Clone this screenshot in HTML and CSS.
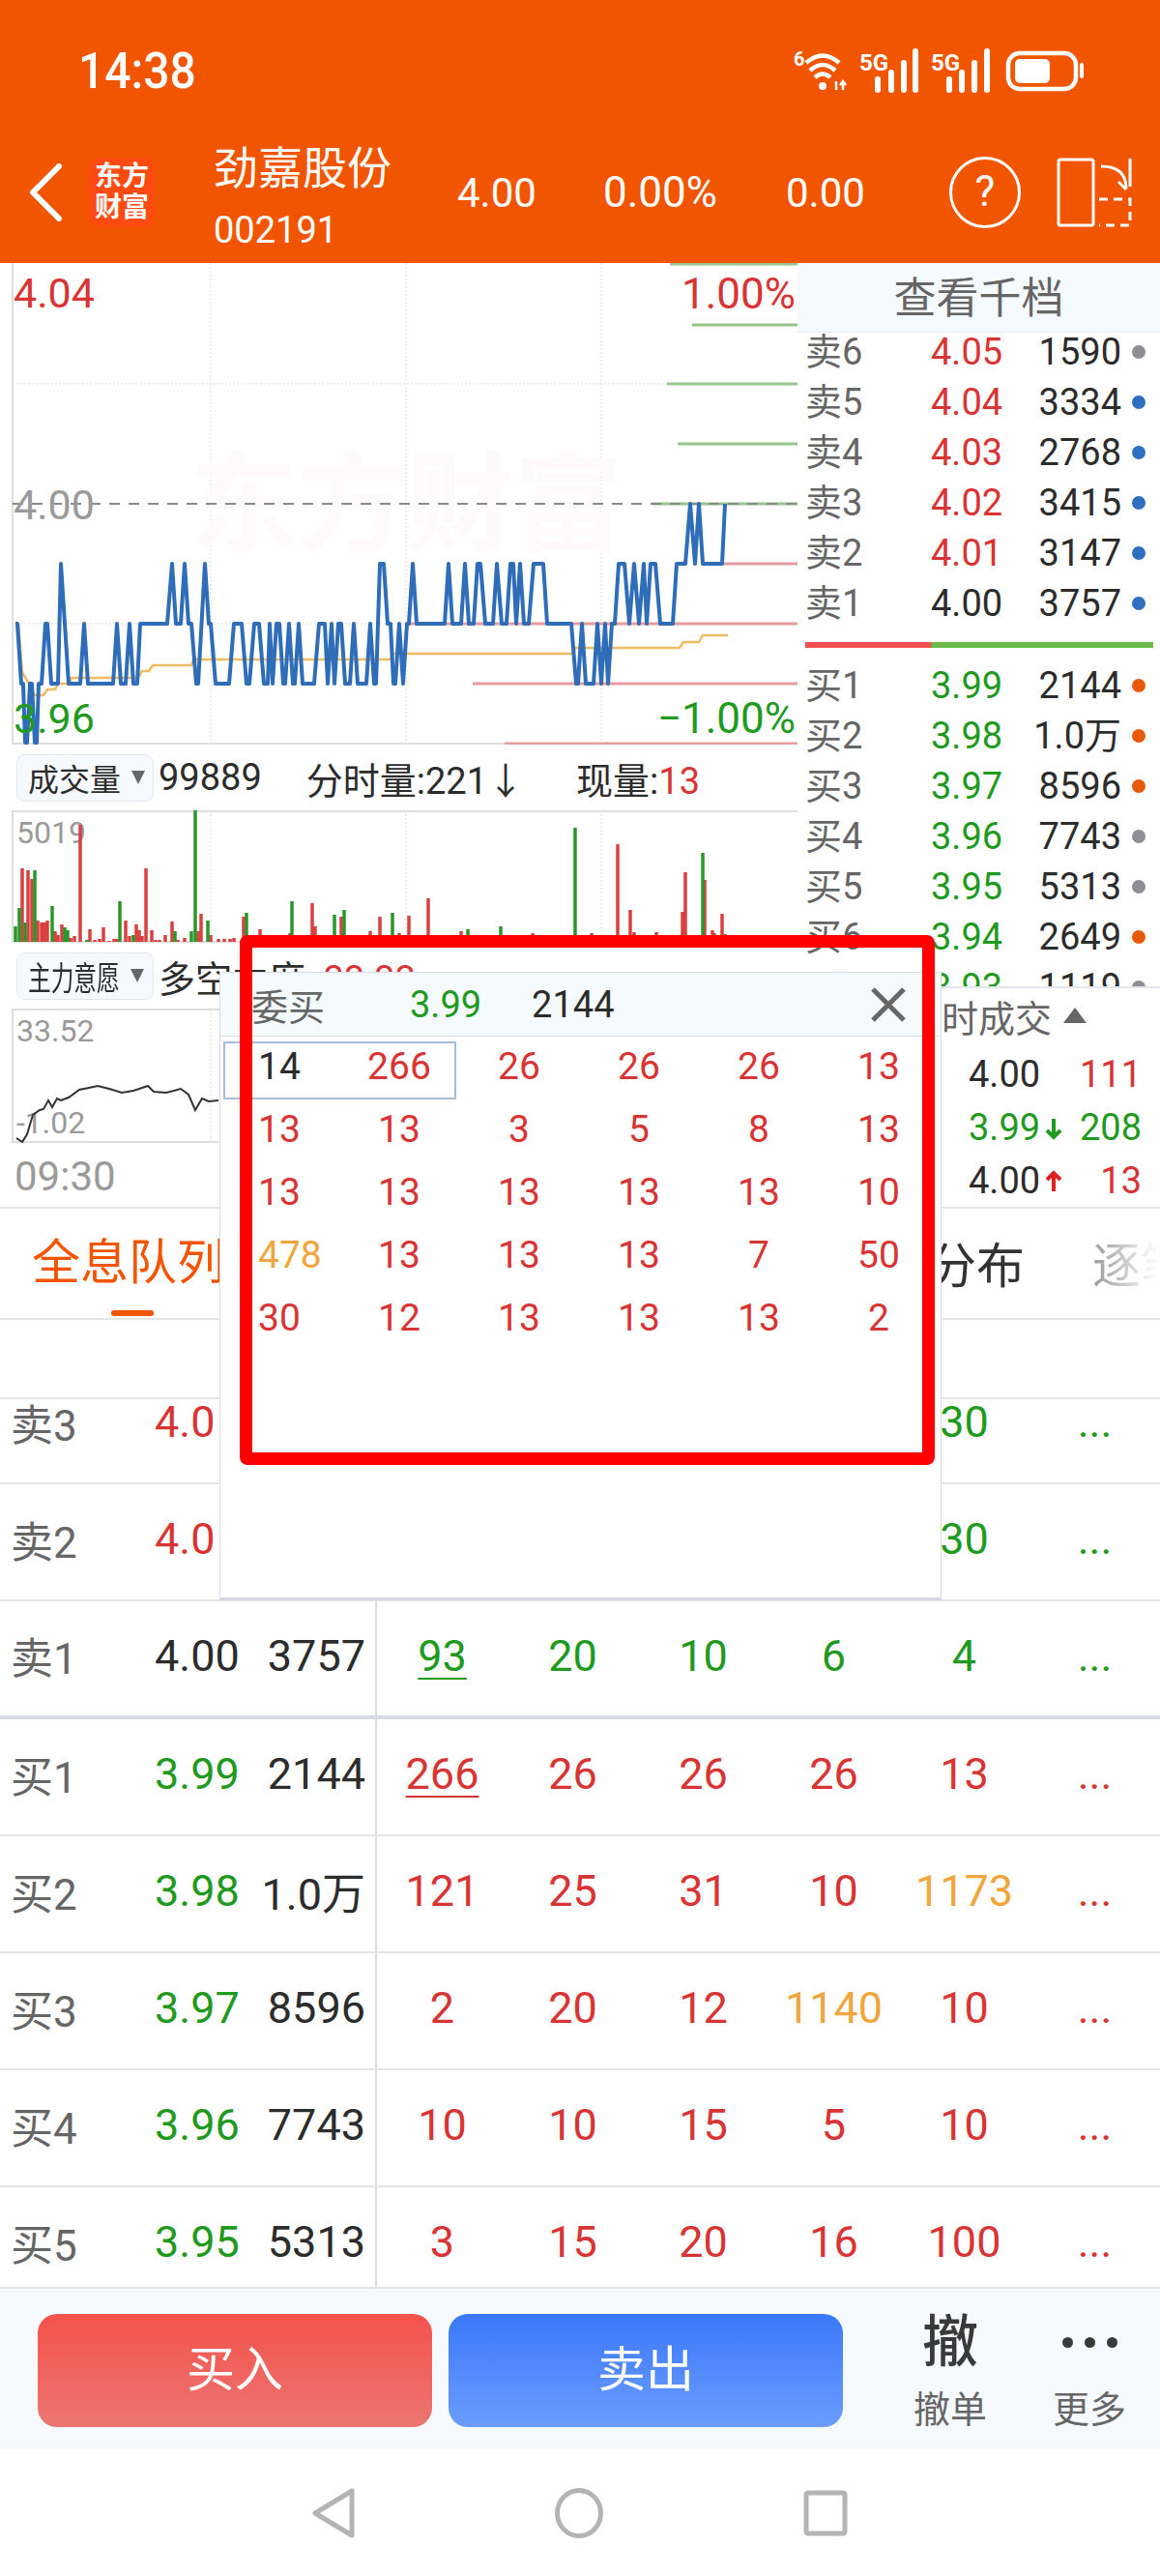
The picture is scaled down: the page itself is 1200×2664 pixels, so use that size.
FILE: index.html
```html
<!DOCTYPE html>
<html lang="zh-CN">
<head>
    <meta charset="UTF-8">
    <meta name="viewport" content="width=device-width, initial-scale=1.0">
    <title>劲嘉股份</title>
    <link rel="stylesheet" href="styles.css">
</head>
<body>
    <div class="page">

        <!-- Cabecera -->
        <header class="top">
            <div class="status-bar">
                <span class="clock">14:38</span>
                <svg class="status-icons" width="302" height="46" viewBox="820 50 302 46">
                    <text class="st-tiny" x="821" y="68">6</text>
                    <path class="st-line" d="M834 65 Q851 50 868 65 M838 73 Q851 61 864 73 M843 80 Q851 73 859 80"/>
                    <circle class="st-fill" cx="851" cy="89" r="4"/>
                    <path class="st-thin" d="M865 93 V84 M872 93 V84 M869 88 L872 84 L875 88"/>
                    <text class="st-5g" x="889" y="73">5G</text>
                    <path class="st-bars" d="M908 93 V82 M922 93 V75 M935 93 V65 M947 93 V53"/>
                    <text class="st-5g" x="963" y="73">5G</text>
                    <path class="st-bars" d="M982 93 V82 M995 93 V75 M1008 93 V65 M1021 93 V53"/>
                    <rect class="st-line" x="1043" y="55" width="70" height="37" rx="12"/>
                    <rect class="st-fill" x="1050" y="61" width="36" height="25" rx="5"/>
                    <rect class="st-fill" x="1117" y="65" width="4" height="16" rx="2"/>
                </svg>
            </div>
            <div class="nav-row">
                <svg class="back" width="36" height="60" viewBox="0 0 36 60">
                    <path d="M32 3 L5 30 L32 57"/>
                </svg>
                <div class="logo">东方<br>财富</div>
                <div class="stock">
                    <div>劲嘉股份</div>
                    <div class="stock-code">002191</div>
                </div>
                <span class="quote q-price">4.00</span>
                <span class="quote q-pct">0.00%</span>
                <span class="quote q-chg">0.00</span>
                <div class="help">?</div>
                <svg class="split" width="78" height="72" viewBox="0 0 78 72">
                    <rect x="2" y="2" width="36" height="68" rx="2"/>
                    <path d="M46 9 Q72 9 72 32 M64 25 L72 33 M76 1 V30"/>
                    <path class="split-dash" d="M44 43 H76 V70 H44"/>
                </svg>
            </div>
        </header>

        <!-- Graficos y libro de ordenes -->
        <section class="main">
            <div class="charts">
                <svg class="price-chart" width="825" height="498" viewBox="0 272 825 498">
                    <path class="grid-dot" d="M218 272 V769 M420 272 V769 M622 272 V769 M13 397 H825 M13 645 H825"/>
                    <path class="axis" d="M13 272 V769 H825"/>
                    <text class="watermark" x="196" y="562">东方财富</text>
                    <path class="depth-green" d="M693 273 H825 M716 336 H825 M690 397 H825 M701 459 H825 M675 521 H825"/>
                    <path class="depth-red" d="M746 583 H825 M421 645 H825 M489 707 H825 M522 769 H825"/>
                    <path class="mid-line" d="M13 521 H825"/>
                    <polyline class="avg-line" points="19,645 23,695 30,707 36,719 45,719 49,713 57,713 60,707 72,707 74,701 143,701 147,694 154,694 158,688 198,688 200,682 404,682 407,676 593,676 595,670 703,670 707,664 723,664 727,657 753,657"/>
                    <polyline class="price-line" points="16,645 18,645 22,707 24,707 26,768 28,768 31,707 33,707 36,768 38,768 40,707 43,707 47,645 49,645 53,707 60,707 63,583 71,707 83,707 87,645 91,707 117,707 121,645 125,707 130,707 134,645 138,707 142,707 145,645 173,645 178,583 182,645 187,645 191,583 195,645 198,645 203,707 205,707 212,583 216,645 218,645 223,707 237,707 242,645 250,645 255,707 258,707 263,645 268,645 273,707 277,707 279,645 282,707 286,645 289,645 293,707 295,707 299,645 303,707 305,707 309,645 313,707 325,707 330,645 336,645 339,707 343,645 346,707 350,645 353,645 357,707 362,707 366,645 370,707 379,707 383,645 387,707 389,707 393,583 397,583 401,645 404,645 407,707 409,707 413,645 417,707 421,645 423,645 427,583 431,645 460,645 464,583 468,645 477,645 481,583 485,645 490,645 494,583 497,583 502,645 510,645 514,583 519,645 524,645 528,583 531,583 534,645 538,583 542,645 547,645 552,583 562,583 566,645 591,645 596,707 598,707 602,645 606,707 614,707 618,645 622,707 626,645 629,707 633,645 636,645 640,583 646,583 651,645 656,583 661,645 666,583 669,645 673,583 678,583 683,645 696,645 700,583 709,583 714,521 719,583 723,521 727,583 747,583 750,521"/>
                    <text class="lbl red" x="14" y="318">4.04</text>
                    <text class="lbl lbl-end red" x="823" y="319">1.00%</text>
                    <text class="lbl gray" x="14" y="537">4.00</text>
                    <text class="lbl green" x="14" y="758">3.96</text>
                    <text class="lbl lbl-end green" x="823" y="758">−1.00%</text>
                </svg>

                <div class="stat-row">
                    <div class="picker"><span>成交量</span><i class="caret"></i></div>
                    <span class="stat-num">99889</span>
                    <span class="stat-a">分时量:221↓</span>
                    <span class="stat-b">现量:<span class="red">13</span></span>
                </div>

                <svg class="vol-chart" width="825" height="137" viewBox="0 838 825 137">
                    <path class="grid-dot" d="M218 838 V974 M420 838 V974 M622 838 V974"/>
                    <path class="axis" d="M825 839 H13 V974 H825"/>
                    <text class="small-lbl" x="17" y="872">5019</text>
                    <path class="bar-red" d="M23 974V898M29 974V900M33 974V909M39 974V952M43 974V954M46 974V954M49 974V952M57 974V963M60 974V967M64 974V956M73 974V970M77 974V968M83 974V853M93 974V961M98 974V972M103 974V971M107 974V959M113 974V973M118 974V971M121 974V971M130 974V952M134 974V968M141 974V956M144 974V962M147 974V968M151 974V898M157 974V962M161 974V972M165 974V972M171 974V967M178 974V953M184 974V972M191 974V970M205 974V963M208 974V945M218 974V967M226 974V971M232 974V971M238 974V971M242 974V970M252 974V948M269 974V961M300 974V965M323 974V934M326 974V958M353 974V948M383 974V963M393 974V948M413 974V965M423 974V947M443 974V929M477 974V963M551 974V965M612 974V965M639 974V873M652 974V941M656 974V964M679 974V964M706 974V943M709 974V902M729 974V910M737 974V962M739 974V965M747 974V945M750 974V966"/>
                    <path class="bar-green" d="M16 974V958M20 974V939M26 974V954M36 974V900M54 974V937M67 974V959M70 974V962M90 974V972M124 974V932M138 974V967M181 974V963M198 974V963M202 974V838M215 974V952M255 974V944M302 974V932M346 974V946M356 974V941M406 974V944M484 974V961M518 974V958M595 974V856M727 974V882"/>
                </svg>

                <div class="stat-row">
                    <div class="picker"><span class="squeeze">主力意愿</span><i class="caret caret-tight"></i></div>
                    <span class="stat-num">多空力度: <span class="red">33.33</span></span>
                </div>

                <svg class="mini-chart" width="825" height="139" viewBox="0 1043 825 139">
                    <path class="grid-dot" d="M218 1043 V1180"/>
                    <path class="axis" d="M825 1044 H13 V1181 H825"/>
                    <text class="small-lbl" x="17" y="1077">33.52</text>
                    <text class="small-lbl" x="17" y="1172">-1.02</text>
                    <polyline class="mini-line" points="17,1177 23,1181 28,1173 34,1153 41,1148 45,1147 50,1138 54,1145 59,1136 63,1138 71,1135 82,1127 92,1125 101,1123 113,1126 126,1130 138,1128 153,1123 159,1129 172,1130 187,1126 195,1132 202,1148 209,1136 216,1139 226,1138"/>
                </svg>

                <div class="time-row">09:30</div>
            </div>

            <aside class="side">
                <div class="book">
                    <div class="book-title">查看千档</div>
                    <div class="book-rows">
                        <div class="level"><span class="gray-d">卖6</span><span class="red">4.05</span><span class="vol">1590</span><i class="dot d-gray"></i></div>
                        <div class="level"><span class="gray-d">卖5</span><span class="red">4.04</span><span class="vol">3334</span><i class="dot d-blue"></i></div>
                        <div class="level"><span class="gray-d">卖4</span><span class="red">4.03</span><span class="vol">2768</span><i class="dot d-blue"></i></div>
                        <div class="level"><span class="gray-d">卖3</span><span class="red">4.02</span><span class="vol">3415</span><i class="dot d-blue"></i></div>
                        <div class="level"><span class="gray-d">卖2</span><span class="red">4.01</span><span class="vol">3147</span><i class="dot d-blue"></i></div>
                        <div class="level"><span class="gray-d">卖1</span><span>4.00</span><span class="vol">3757</span><i class="dot d-blue"></i></div>
                        <div class="book-sep"><div class="sep-bar"></div></div>
                        <div class="level"><span class="gray-d">买1</span><span class="green">3.99</span><span class="vol">2144</span><i class="dot d-orange"></i></div>
                        <div class="level"><span class="gray-d">买2</span><span class="green">3.98</span><span class="vol">1.0万</span><i class="dot d-orange"></i></div>
                        <div class="level"><span class="gray-d">买3</span><span class="green">3.97</span><span class="vol">8596</span><i class="dot d-orange"></i></div>
                        <div class="level"><span class="gray-d">买4</span><span class="green">3.96</span><span class="vol">7743</span><i class="dot d-gray"></i></div>
                        <div class="level"><span class="gray-d">买5</span><span class="green">3.95</span><span class="vol">5313</span><i class="dot d-gray"></i></div>
                        <div class="level"><span class="gray-d">买6</span><span class="green">3.94</span><span class="vol">2649</span><i class="dot d-orange"></i></div>
                        <div class="level"><span class="gray-d">买7</span><span class="green">3.93</span><span class="vol">1119</span><i class="dot d-gray"></i></div>
                    </div>
                </div>
                <div class="trades">
                    <div class="trades-title">分时成交<i class="caret-up"></i></div>
                    <div class="trade"><span>4.00</span><span></span><span class="vol red">111</span></div>
                    <div class="trade">
                        <span class="green">3.99</span>
                        <svg class="arrow arrow-down" width="18" height="24" viewBox="0 0 18 24"><path d="M9 2 V21 M2 14 L9 21 L16 14"/></svg>
                        <span class="vol green">208</span>
                    </div>
                    <div class="trade">
                        <span>4.00</span>
                        <svg class="arrow arrow-up" width="18" height="24" viewBox="0 0 18 24"><path d="M9 22 V3 M2 10 L9 3 L16 10"/></svg>
                        <span class="vol red">13</span>
                    </div>
                </div>
            </aside>
        </section>

        <!-- Pestanas -->
        <nav class="tabs">
            <span class="tab tab-active">全息队列</span>
            <span class="tab-gap"></span>
            <span class="tab">分布</span>
            <span class="tab tab-fade">逐笔</span>
        </nav>

        <!-- Tabla de colas -->
        <div class="table-head"></div>
        <div class="table-view">
            <div class="table-scroll">
                <div class="t-row">
                    <div class="t-left"><span class="gray-d">卖3</span><span class="red price-cut">4.02</span><span class="vol">3415</span></div>
                    <div class="t-cells green"><span></span><span></span><span></span><span></span><span>30</span><span>...</span></div>
                </div>
                <div class="t-row">
                    <div class="t-left"><span class="gray-d">卖2</span><span class="red price-cut">4.01</span><span class="vol">3147</span></div>
                    <div class="t-cells green"><span></span><span></span><span></span><span></span><span>30</span><span>...</span></div>
                </div>
                <div class="t-row t-row-mid">
                    <div class="t-left"><span class="gray-d">卖1</span><span>4.00</span><span class="vol">3757</span></div>
                    <div class="t-cells green"><span class="first-lot">93</span><span>20</span><span>10</span><span>6</span><span>4</span><span>...</span></div>
                </div>
                <div class="t-row">
                    <div class="t-left"><span class="gray-d">买1</span><span class="green">3.99</span><span class="vol">2144</span></div>
                    <div class="t-cells red"><span class="first-lot">266</span><span>26</span><span>26</span><span>26</span><span>13</span><span>...</span></div>
                </div>
                <div class="t-row">
                    <div class="t-left"><span class="gray-d">买2</span><span class="green">3.98</span><span class="vol">1.0万</span></div>
                    <div class="t-cells red"><span>121</span><span>25</span><span>31</span><span>10</span><span class="big-lot">1173</span><span>...</span></div>
                </div>
                <div class="t-row">
                    <div class="t-left"><span class="gray-d">买3</span><span class="green">3.97</span><span class="vol">8596</span></div>
                    <div class="t-cells red"><span>2</span><span>20</span><span>12</span><span class="big-lot">1140</span><span>10</span><span>...</span></div>
                </div>
                <div class="t-row">
                    <div class="t-left"><span class="gray-d">买4</span><span class="green">3.96</span><span class="vol">7743</span></div>
                    <div class="t-cells red"><span>10</span><span>10</span><span>15</span><span>5</span><span>10</span><span>...</span></div>
                </div>
                <div class="t-row">
                    <div class="t-left"><span class="gray-d">买5</span><span class="green">3.95</span><span class="vol">5313</span></div>
                    <div class="t-cells red"><span>3</span><span>15</span><span>20</span><span>16</span><span>100</span><span>...</span></div>
                </div>
            </div>
        </div>

        <!-- Barra de acciones -->
        <div class="actions">
            <div class="btn btn-buy">买入</div>
            <div class="btn btn-sell">卖出</div>
            <div class="act act-first">
                <div class="act-icon">撤</div>
                <div class="act-label">撤单</div>
            </div>
            <div class="act">
                <div class="act-dots"><i></i><i></i><i></i></div>
                <div class="act-label">更多</div>
            </div>
        </div>

        <!-- Barra del sistema -->
        <div class="sys-nav">
            <svg width="44" height="52" viewBox="0 0 44 52"><path d="M41 3 V49 L3 26 Z"/></svg>
            <svg width="50" height="52" viewBox="0 0 50 52"><ellipse cx="25" cy="26" rx="22.500" ry="23.500"/></svg>
            <svg width="46" height="48" viewBox="0 0 46 48"><rect x="3" y="3" width="40" height="42" rx="2"/></svg>
        </div>

        <!-- Ventana emergente de la cola -->
        <div class="popup">
            <div class="popup-head">
                <span class="gray-d">委买</span>
                <span class="green popup-price">3.99</span>
                <span class="popup-vol">2144</span>
                <svg class="popup-close" width="38" height="36" viewBox="0 0 38 36"><path d="M3 2 L35 34 M35 2 L3 34"/></svg>
            </div>
            <div class="popup-grid">
                <i class="popup-sel"></i>
                <span class="dark">14</span><span>266</span><span>26</span><span>26</span><span>26</span><span>13</span>
                <span>13</span><span>13</span><span>3</span><span>5</span><span>8</span><span>13</span>
                <span>13</span><span>13</span><span>13</span><span>13</span><span>13</span><span>10</span>
                <span class="big-lot">478</span><span>13</span><span>13</span><span>13</span><span>7</span><span>50</span>
                <span>30</span><span>12</span><span>13</span><span>13</span><span>13</span><span>2</span>
            </div>
        </div>

        <!-- Marca roja de la captura -->
        <div class="red-mark"></div>
    </div>
</body>
</html>
```

FILE: styles.css
```css
* {
    box-sizing: border-box;
}

body {
    margin: 0;
    background-color: #fff;
    font-family: Roboto, "Noto Sans CJK SC", sans-serif;
    color: #2c2c2c;
}

i {
    font-style: normal;
}

svg {
    display: block;
}

.page {
    position: relative;
    width: 1200px;
    height: 2664px;
    overflow: hidden;
}

.red {
    color: #d83434;
    fill: #d83434;
}

.green {
    color: #1f9a1f;
    fill: #1f9a1f;
}

.gray {
    fill: #9a9a9a;
}

.gray-d {
    color: #666;
}

.vol {
    text-align: right;
}

/* Cabecera */
.top {
    height: 272px;
    background-color: #f25500;
    color: #fff;
}

.status-bar {
    height: 146px;
    padding: 0 78px 0 81px;
    display: flex;
    justify-content: space-between;
    align-items: center;
}

.clock {
    font-size: 48px;
    font-weight: 500;
    transform: scaleY(1.08);
}

.st-tiny {
    font-size: 20px;
    font-weight: 700;
    fill: #fff;
}

.st-5g {
    font-size: 24px;
    font-weight: 700;
    fill: #fff;
}

.st-line {
    fill: none;
    stroke: #fff;
    stroke-width: 4.500;
}

.st-thin {
    fill: none;
    stroke: #fff;
    stroke-width: 2.500;
}

.st-fill {
    fill: #fff;
}

.st-bars {
    fill: none;
    stroke: #fff;
    stroke-width: 6;
    stroke-linecap: round;
}

.nav-row {
    height: 126px;
    padding: 0 0 20px 29px;
    display: flex;
    align-items: center;
}

.back path {
    fill: none;
    stroke: #fff;
    stroke-width: 6;
    stroke-linecap: round;
    stroke-linejoin: round;
}

.logo {
    width: 68px;
    height: 72px;
    margin-left: 27px;
    background-color: #ff4a12;
    border-radius: 12px;
    font-size: 28px;
    font-weight: 700;
    line-height: 32px;
    padding-top: 4px;
    text-align: center;
}

.stock {
    width: 252px;
    margin-left: 61px;
    padding-top: 14px;
    font-size: 46px;
    line-height: 64px;
}

.stock-code {
    font-size: 38px;
}

.quote {
    font-size: 42px;
}

.q-price {
    width: 151px;
}

.q-pct {
    width: 189px;
    font-size: 44px;
}

.q-chg {
    width: 169px;
}

.help {
    width: 74px;
    height: 74px;
    border: 3px solid #fff;
    border-radius: 50%;
    font-size: 44px;
    line-height: 66px;
    text-align: center;
}

.split {
    margin-left: 37px;
}

.split rect,
.split path {
    fill: none;
    stroke: #fff;
    stroke-width: 3;
}

.split .split-dash {
    stroke-dasharray: 9 6;
}

/* Graficos */
.main {
    height: 978px;
    display: flex;
    border-bottom: 2px solid #e6e6e6;
}

.charts {
    width: 825px;
}

.grid-dot {
    fill: none;
    stroke: #dcdcdc;
    stroke-width: 1;
    stroke-dasharray: 2 2;
}

.axis {
    fill: none;
    stroke: #dedede;
    stroke-width: 2;
}

.watermark {
    font-size: 112px;
    font-weight: 700;
    fill: #fef9fb;
}

.depth-green {
    fill: none;
    stroke: #96c68a;
    stroke-width: 3;
}

.depth-red {
    fill: none;
    stroke: #e79c9c;
    stroke-width: 3;
}

.mid-line {
    fill: none;
    stroke: #8a8a8a;
    stroke-width: 2;
    stroke-dasharray: 11 9;
}

.avg-line {
    fill: none;
    stroke: #f0bc62;
    stroke-width: 2.500;
}

.price-line {
    fill: none;
    stroke: #2f6db8;
    stroke-width: 4;
    stroke-linejoin: round;
}

.lbl {
    font-size: 43px;
}

.lbl-end {
    font-size: 44px;
    text-anchor: end;
}

.stat-row {
    height: 68px;
    padding-left: 17px;
    display: flex;
    align-items: center;
    font-size: 38px;
    white-space: nowrap;
}

.picker {
    width: 142px;
    height: 49px;
    padding-left: 11px;
    display: flex;
    align-items: center;
    background-color: #f6faff;
    border: 1px solid #e3e7ee;
    border-radius: 9px;
    font-size: 32px;
}

.squeeze {
    width: 106px;
    display: inline-block;
    transform: scale(0.74, 1.06);
    transform-origin: left center;
}

.caret {
    margin-left: 11px;
    border-left: 7px solid transparent;
    border-right: 7px solid transparent;
    border-top: 14px solid #666;
}

.caret-tight {
    margin-left: 0;
}

.stat-num {
    margin-left: 5px;
}

.stat-a {
    margin-left: 46px;
}

.stat-b {
    margin-left: 54px;
}

.small-lbl {
    font-size: 32px;
    fill: #9a9a9a;
}

.bar-red {
    fill: none;
    stroke: #d94040;
    stroke-width: 3.500;
}

.bar-green {
    fill: none;
    stroke: #2a962a;
    stroke-width: 3.500;
}

.mini-line {
    fill: none;
    stroke: #333;
    stroke-width: 2;
}

.time-row {
    height: 68px;
    padding-left: 15px;
    font-size: 42px;
    line-height: 70px;
    color: #9a9a9a;
}

/* Libro de ordenes */
.side {
    width: 375px;
}

.book {
    height: 748px;
    overflow: hidden;
}

.book-title {
    height: 72px;
    background-color: #f5faff;
    border-bottom: 1px solid #e8ecf2;
    font-size: 44px;
    line-height: 74px;
    text-align: center;
    color: #666;
}

.book-rows {
    margin-top: -6px;
    position: relative;
}

.level {
    height: 52px;
    padding-left: 8px;
    display: grid;
    grid-template-columns: 130px 90px 107px 48px;
    align-items: center;
    font-size: 38px;
    line-height: 52px;
    white-space: nowrap;
}

.dot {
    width: 14px;
    height: 14px;
    margin-left: 11px;
    border-radius: 50%;
}

.d-gray {
    background-color: #8e8f96;
}

.d-blue {
    background-color: #2f6fc0;
}

.d-orange {
    background-color: #e8590c;
}

.book-sep {
    height: 33px;
    padding: 0 7px 0 8px;
    display: flex;
    align-items: center;
}

.sep-bar {
    width: 100%;
    height: 6px;
    background: linear-gradient(100deg, #f05050 0, #f05050 36%, #6abb4b 36.500%, #6abb4b 100%);
}

.trades {
    height: 228px;
    border-top: 2px solid #e3e6ec;
}

.trades-title {
    height: 62px;
    padding: 0 0 6px 111px;
    display: flex;
    align-items: center;
    font-size: 38px;
    color: #666;
}

.caret-up {
    margin-left: 12px;
    border-left: 12px solid transparent;
    border-right: 12px solid transparent;
    border-bottom: 16px solid #666;
}

.trade {
    height: 55px;
    padding-left: 177px;
    display: grid;
    grid-template-columns: 79px 18px 82px;
    align-items: center;
    font-size: 38px;
    line-height: 55px;
}

.arrow path {
    fill: none;
    stroke-width: 4;
}

.arrow-down path {
    stroke: #1f9a1f;
}

.arrow-up path {
    stroke: #e01f1f;
}

/* Pestanas */
.tabs {
    height: 115px;
    padding: 0 0 3px 33px;
    display: flex;
    align-items: center;
    font-size: 50px;
    border-bottom: 2px solid #e6e6e6;
}

.tab {
    color: #333;
}

.tab-active {
    position: relative;
    align-self: stretch;
    line-height: 112px;
    color: #f25500;
}

.tab-active::after {
    content: "";
    position: absolute;
    left: 82px;
    bottom: -1px;
    width: 44px;
    height: 6px;
    background-color: #f25500;
    border-radius: 3px;
}

.tab-gap {
    flex: 1;
}

.tab-fade {
    margin: 0 -30px 0 70px;
    background: linear-gradient(90deg, #999 0, #fff 68%);
    -webkit-background-clip: text;
    background-clip: text;
    color: transparent;
}

/* Tabla */
.table-head {
    height: 82px;
    border-bottom: 2px solid #e4e4e4;
}

.table-view {
    height: 918px;
    overflow: hidden;
}

.table-scroll {
    margin-top: -33px;
}

.t-row {
    height: 121px;
    display: flex;
    border-bottom: 2px solid #e4e4e4;
    font-size: 45px;
    white-space: nowrap;
}

.t-row-mid {
    height: 122px;
    border-bottom: 4px solid #d9dbe6;
}

.t-left {
    width: 392px;
    padding: 0 10px 6px 11px;
    display: grid;
    grid-template-columns: 149px 85px 1fr;
    align-items: center;
    border-right: 2px solid #dcdcdc;
}

.t-left .gray-d {
    font-size: 44px;
}

.price-cut {
    width: 61px;
    overflow: hidden;
}

.t-cells {
    padding-bottom: 6px;
    display: grid;
    grid-template-columns: repeat(6, 135px);
    align-items: center;
    text-align: center;
}

.first-lot {
    justify-self: center;
    text-decoration: underline;
    text-underline-offset: 7px;
    text-decoration-thickness: 2px;
}

.big-lot {
    color: #f0a63c;
}

/* Acciones */
.actions {
    height: 168px;
    padding: 26px 0 0 39px;
    display: flex;
    align-items: flex-start;
    background-color: #f6faff;
    border-top: 2px solid #e4e4e4;
}

.btn {
    width: 408px;
    height: 117px;
    margin-right: 17px;
    border-radius: 20px;
    font-size: 50px;
    line-height: 117px;
    text-align: center;
    color: #fff;
}

.btn-buy {
    background: linear-gradient(180deg, #f5524c, #ec7570);
}

.btn-sell {
    margin-right: 0;
    background: linear-gradient(180deg, #3a78fb, #6b9dfd);
}

.act {
    width: 144px;
    margin-top: -1px;
    text-align: center;
}

.act-first {
    margin-left: 39px;
}

.act-icon {
    height: 60px;
    font-size: 58px;
    font-weight: 500;
    line-height: 60px;
    color: #3a3a3a;
}

.act-dots {
    height: 60px;
    display: flex;
    justify-content: center;
    align-items: center;
    gap: 12px;
}

.act-dots i {
    width: 11px;
    height: 11px;
    background-color: #3a3a3a;
    border-radius: 50%;
}

.act-label {
    margin-top: 20px;
    font-size: 38px;
    line-height: 40px;
    color: #666;
}

/* Barra del sistema */
.sys-nav {
    height: 131px;
    display: flex;
    justify-content: center;
    align-items: center;
    gap: 207px;
}

.sys-nav path,
.sys-nav ellipse,
.sys-nav rect {
    fill: none;
    stroke: #b4b4b4;
    stroke-width: 5;
    stroke-linejoin: round;
}

/* Ventana emergente */
.popup {
    position: absolute;
    left: 227px;
    top: 1005px;
    width: 747px;
    height: 650px;
    background-color: #fff;
    border: 1px solid #d8dce4;
    border-bottom: 3px solid #d4d8e4;
}

.popup-head {
    height: 66px;
    padding-left: 32px;
    display: flex;
    align-items: center;
    background-color: #f5faff;
    border-bottom: 1px solid #d8dce4;
    font-size: 38px;
}

.popup-price {
    margin-left: 88px;
}

.popup-vol {
    margin-left: 52px;
}

.popup-close {
    margin-left: auto;
    margin-right: 35px;
}

.popup-close path {
    fill: none;
    stroke: #666;
    stroke-width: 5;
}

.popup-grid {
    position: relative;
    margin: -2px 0 0 -1px;
    display: grid;
    grid-template-columns: repeat(6, 124px);
    grid-auto-rows: 65px;
    align-items: center;
    font-size: 39px;
    text-align: center;
    color: #d83434;
}

.popup-grid span:nth-of-type(6n+1) {
    padding-left: 40px;
    text-align: left;
}

.popup-grid .dark {
    color: #2c2c2c;
}

.popup-sel {
    position: absolute;
    left: 4px;
    top: 7px;
    width: 241px;
    height: 60px;
    border: 2px solid #a6bcd9;
}

/* Marca roja */
.red-mark {
    position: absolute;
    left: 248px;
    top: 967px;
    width: 719px;
    height: 548px;
    border: 13px solid #ff0000;
    border-radius: 8px;
}
```
